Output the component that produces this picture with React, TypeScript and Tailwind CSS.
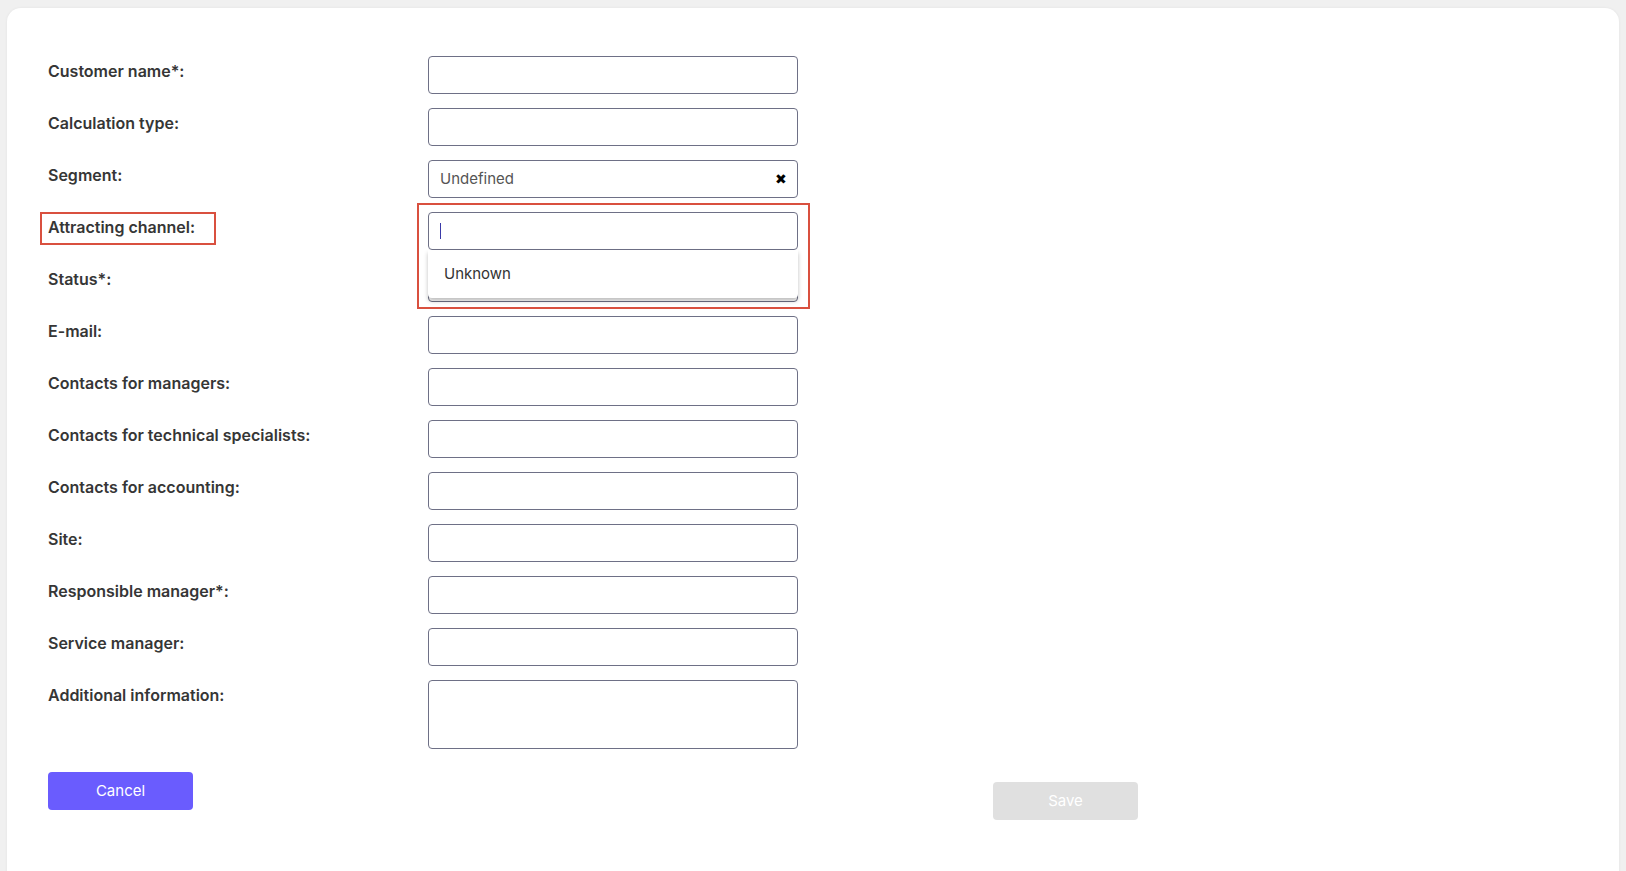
import React from "react";

const fields: { label: string; value?: string; clearable?: boolean; tall?: boolean }[] = [
  { label: "Customer name*:" },
  { label: "Calculation type:" },
  { label: "Segment:", value: "Undefined", clearable: true },
  { label: "Attracting channel:" },
  { label: "Status*:" },
  { label: "E-mail:" },
  { label: "Contacts for managers:" },
  { label: "Contacts for technical specialists:" },
  { label: "Contacts for accounting:" },
  { label: "Site:" },
  { label: "Responsible manager*:" },
  { label: "Service manager:" },
  { label: "Additional information:", tall: true },
];

function Field({ label, value, clearable, tall, index }: { label: string; value?: string; clearable?: boolean; tall?: boolean; index: number }) {
  const active = index === 3;
  return (
    <div className="flex items-start">
      <div className="relative w-[380px] pt-[3px] text-[16px] leading-6 font-semibold text-[#363636]">
        {active && (
          <div className="absolute left-[-8px] top-[0px] w-[176px] h-[33px] border-2 border-[#d9503f]" />
        )}
        <span className="relative">{label}</span>
      </div>
      <div className="relative w-[370px]">
        {active && (
          <div className="absolute left-[-11px] top-[-9px] w-[393px] h-[106px] border-2 border-[#d9503f] z-20 pointer-events-none" />
        )}
        <div
          className={`flex items-center bg-white border border-[#6e7086] rounded-[4px] pl-[11px] pr-[10px] ${
            tall ? "h-[69px]" : "h-[38px]"
          }`}
        >
          {value && <span className="flex-1 text-[15px] text-[#555555]">{value}</span>}
          {active && <span className="w-px h-[16px] bg-[#3a3aa8]" />}
          {clearable && <span className="text-[14px] text-black leading-none">✖</span>}
        </div>
        {active && (
          <div className="absolute left-0 right-0 top-[38px] h-[48px] bg-white rounded-b-[4px] shadow-[0_3px_4px_rgba(0,0,0,0.25)] z-10 flex items-center pl-[16px] text-[15px] text-[#333333]">
            Unknown
          </div>
        )}
      </div>
    </div>
  );
}

export default function App() {
  return (
    <div className="min-h-[871px] bg-[#f0f0f0] pt-[8px] px-[7px] overflow-hidden" style={{ fontFamily: "Inter, 'Noto Sans', sans-serif" }}>
      <div className="bg-white rounded-t-[14px] min-h-[900px] pt-[48px] pl-[41px] shadow-[0_0_3px_rgba(0,0,0,0.06)]">
        <div className="flex flex-col gap-[14px]">
          {fields.map((f, i) => (
            <Field key={f.label} {...f} index={i} />
          ))}
        </div>
        <div className="flex justify-between w-[1090px] mt-[23px]">
          <button className="w-[145px] h-[38px] rounded-[4px] bg-[#6a5cfe] text-white text-[15px]">Cancel</button>
          <button className="w-[145px] h-[38px] mt-[10px] rounded-[4px] bg-[#e0e0e0] text-white text-[15px]">Save</button>
        </div>
      </div>
    </div>
  );
}
